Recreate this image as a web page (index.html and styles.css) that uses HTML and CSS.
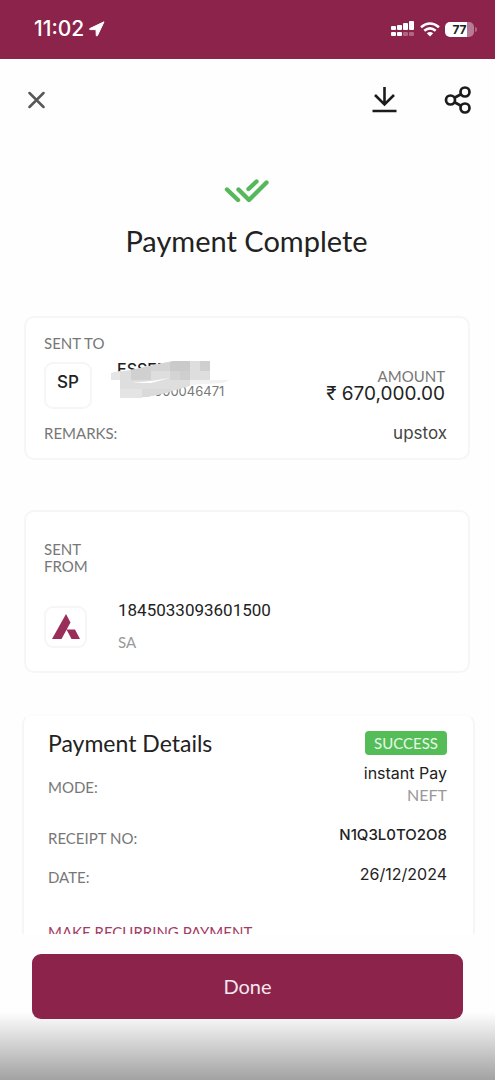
FILE: index.html
```
<!DOCTYPE html>
<html lang="en">
<head>
<meta charset="utf-8">
<meta name="viewport" content="width=device-width, initial-scale=1">
<title>Payment Complete</title>
<link rel="stylesheet" href="styles.css">
</head>
<body>
<div class="screen">
  <div class="status-bar">
    <div class="status-left">
      <span class="clock">11:02</span>
      <svg width="16" height="16" viewBox="0 0 16 16" aria-hidden="true"><path d="M15 .8 .8 7.600q-.8.8.3 1H7l.3 5.900q.3 1 1.100.2z" fill="#fff" stroke="#fff" stroke-linejoin="round"/></svg>
    </div>
    <div class="status-right">
      <svg width="24" height="16" viewBox="0 0 24 16" aria-hidden="true">
        <g fill="#fff"><rect x="0" y="5" width="5" height="4" rx="1"/><rect x="6" y="4" width="5" height="5" rx="1"/><rect x="12" y="2" width="5" height="7" rx="1"/><rect x="18" y="0" width="5" height="9" rx="1"/><rect x="0" y="11" width="5" height="4" rx="1"/><rect x="6" y="11" width="5" height="4" rx="1"/></g>
        <g fill="#b06585"><rect x="12" y="11" width="5" height="4" rx="1"/><rect x="18" y="11" width="5" height="4" rx="1"/></g>
      </svg>
      <svg width="20" height="15" viewBox="0 0 20 15" aria-hidden="true"><g fill="none" stroke="#fff" stroke-width="2.600"><path d="M1 5.200Q10-2.200 19 5.200"/><path d="M4.300 8.800Q10 4 15.700 8.800"/></g><path d="M6.800 11.200Q10 8.600 13.200 11.200L10 14.500z" fill="#fff"/></svg>
      <span class="battery"><span class="battery-level">77</span></span>
    </div>
  </div>

  <header class="toolbar">
    <button class="icon-button" type="button" aria-label="Close">
      <svg width="18" height="18" viewBox="0 0 18 18"><path d="M1.500 2 15.500 16M15.500 2 1.500 16" stroke="#585858" stroke-width="2.500" stroke-linecap="round"/></svg>
    </button>
    <div class="toolbar-actions">
      <button class="icon-button" type="button" aria-label="Download">
        <svg width="26" height="28" viewBox="0 0 26 28"><path d="M12.500 1V18M3 9 12.500 18.500 22 9M.5 25H24.500" fill="none" stroke="#1c1c1c" stroke-width="2.600"/></svg>
      </button>
      <button class="icon-button" type="button" aria-label="Share">
        <svg width="28" height="28" viewBox="0 0 28 28"><g fill="none" stroke="#1c1c1c" stroke-width="2.700"><circle cx="6.500" cy="14" r="4.500"/><circle cx="21" cy="6" r="4.500"/><circle cx="21" cy="22" r="4.500"/><path d="M10.500 11.800 17 8.200M10.500 16.200 17 19.800"/></g></svg>
      </button>
    </div>
  </header>

  <main class="content">
    <section class="result">
      <svg width="46" height="24" viewBox="0 0 46 24" aria-hidden="true"><path d="M3 10.500 14 21M14.500 10.500 25 21 42.500 3.500M24.500 10 32.500 2.500" fill="none" stroke="#55b95b" stroke-width="4.400" stroke-linecap="round" stroke-linejoin="round"/></svg>
      <h1 class="title">Payment Complete</h1>
    </section>

    <section class="card card-to">
      <div class="label">SENT TO</div>
      <div class="party">
        <div class="avatar">SP</div>
        <div class="payee">
          <div class="payee-name">ESSENT</div>
          <div class="payee-account">000046471</div>
          <svg class="mask" width="120" height="40" viewBox="0 0 120 40" aria-hidden="true">
            <path d="M0 12 20 9 52 2 62 0H99V19H79V25L54 32 36 36 9 37V19H0z" fill="#dedede"/>
            <path d="M79 19H118L112 22 79 24z" fill="#f2f2f2"/>
            <path d="M0 12 9 10V19H0z" fill="#e6e6e6"/>
            <path d="M20 9 40 5V19H20z" fill="#d0d0d0"/>
            <path d="M40 5 52 2 59 1V10H40zM59 10H69V19H59z" fill="#d4d4d4"/>
            <path d="M59 1 62 0H79V10H59z" fill="#cacaca"/>
            <path d="M69 10H79V19H69zM89 0H99V10H89z" fill="#cfcfcf"/>
            <path d="M9 28H31V37H9z" fill="#e4e4e4"/>
            <path d="M31 28H60V31L54 32 36 36 31 36z" fill="#dadada"/>
            <path d="M21 22 40 20 59 17 40 22z" fill="#fff"/>
          </svg>
        </div>
        <div class="amount">
          <div class="label">AMOUNT</div>
          <div class="amount-value">₹ 670,000.00</div>
        </div>
      </div>
      <div class="row">
        <div class="label">REMARKS:</div>
        <div class="remark">upstox</div>
      </div>
    </section>

    <section class="card card-from">
      <div class="label">SENT<br>FROM</div>
      <div class="source">
        <div class="bank">
          <svg width="28" height="26" viewBox="0 0 28 26" aria-hidden="true"><path d="M14 0 18.500 8.500 9.500 25H0zM14.500 15.500H23L28 25H19.500z" fill="#9a2e5b"/></svg>
        </div>
        <div>
          <div class="account-number">1845033093601500</div>
          <div class="account-type">SA</div>
        </div>
      </div>
    </section>

    <section class="card card-details">
      <div class="row">
        <h2 class="subtitle">Payment Details</h2>
        <span class="badge">SUCCESS</span>
      </div>
      <div class="row mode">
        <div class="label">MODE:</div>
        <div class="mode-value">
          <div class="value">instant Pay</div>
          <div class="muted">NEFT</div>
        </div>
      </div>
      <div class="row receipt"><div class="label">RECEIPT NO:</div><div class="value reference">N1Q3L0TO2O8</div></div>
      <div class="row date"><div class="label">DATE:</div><div class="value">26/12/2024</div></div>
      <a class="recurring" href="#">MAKE RECURRING PAYMENT</a>
    </section>
  </main>

  <footer class="footer">
    <button class="done" type="button">Done</button>
  </footer>
</div>
</body>
</html>
```
FILE: styles.css
```
* { box-sizing: border-box; }

body {
  margin: 0;
  background: #fefefe;
  color: #222;
  font-family: Lato, "Liberation Sans", sans-serif;
}

.screen {
  display: flex;
  flex-direction: column;
  height: 100vh;
}

.status-bar {
  display: flex;
  flex: none;
  justify-content: space-between;
  align-items: center;
  height: 59px;
  padding: 0 21px 1px 34px;
  background: #8b234b;
  color: #fff;
  font-family: Inter, sans-serif;
}

.status-left,
.status-right {
  display: flex;
  align-items: center;
  gap: 5px;
}

.clock {
  font-size: 21px;
  font-weight: 500;
  line-height: 24px;
}

.battery {
  position: relative;
  width: 29px;
  height: 15px;
  border-radius: 5px;
  background: linear-gradient(to right, #fff 77%, #b97a95 77%);
}

.battery::after {
  content: "";
  position: absolute;
  top: 5px;
  right: -3px;
  width: 2px;
  height: 5px;
  border-radius: 0 2px 2px 0;
  background: #b06585;
}

.battery-level {
  display: block;
  color: #222;
  font-size: 12px;
  font-weight: 700;
  line-height: 15px;
  text-align: center;
}

.toolbar {
  display: flex;
  flex: none;
  justify-content: space-between;
  align-items: center;
  height: 81px;
  padding: 0 23px 0 28px;
}

.toolbar-actions {
  display: flex;
  gap: 46px;
}

.icon-button {
  display: flex;
  padding: 0;
  border: 0;
  background: none;
}

.content {
  flex: 1;
  min-height: 0;
  overflow: hidden;
}

.result {
  display: flex;
  flex-direction: column;
  align-items: center;
  padding: 39px 2px 58px 0;
}

.title {
  margin: 20px 0 0;
  font-size: 29px;
  font-weight: 400;
  line-height: 35px;
}

.card {
  margin: 0 25px 0 24px;
  border: 2px solid #f6f6f6;
  border-radius: 10px;
  background: #fff;
}

.label,
.muted {
  color: #777;
  font-size: 15px;
  line-height: 18px;
}

.row {
  display: flex;
  justify-content: space-between;
  align-items: center;
}

.card-to {
  padding: 16px 21px 16px 18px;
}

.party {
  display: flex;
  margin: 10px 0 15px;
}

.avatar,
.bank {
  flex: none;
  border: 2px solid #f6f6f6;
  border-radius: 9px;
  text-align: center;
}

.avatar {
  width: 48px;
  height: 47px;
  font-family: Inter, sans-serif;
  font-size: 17px;
  font-weight: 500;
  line-height: 36px;
}

.payee {
  position: relative;
  flex: 1;
  margin-left: 25px;
  font-family: Inter, sans-serif;
}

.payee-name {
  font-size: 16px;
  font-weight: 500;
  line-height: 14px;
}

.payee-account {
  margin: 7px 0 0 37px;
  color: #777;
  font-size: 13px;
  line-height: 16px;
}

.mask {
  position: absolute;
  top: -1px;
  left: -6px;
}

.amount {
  padding: 5px 2px 0 0;
  text-align: right;
}

.amount-value {
  font-family: Inter, sans-serif;
  font-size: 19px;
  line-height: 18px;
}

.remark {
  color: #444;
  font-family: Inter, sans-serif;
  font-size: 17px;
  line-height: 18px;
}

.card-from {
  margin-top: 50px;
  padding: 29px 20px 19px 18px;
}

.card-from .label {
  line-height: 17px;
}

.source {
  display: flex;
  align-items: center;
  gap: 31px;
  margin-top: 24px;
}

.bank {
  display: flex;
  justify-content: center;
  align-items: center;
  width: 43px;
  height: 42px;
  margin-top: 2px;
}

.account-number {
  font-family: Roboto, sans-serif;
  font-size: 17px;
  line-height: 22px;
}

.account-type {
  margin-top: 11px;
  color: #999;
  font-size: 15px;
  line-height: 20px;
}

.card-details {
  margin: 41px 20px 0 22px;
  padding: 13px 26px 0 24px;
  border-top-color: #fcfcfc;
}

.card-details .label {
  padding-top: 6px;
}

.subtitle {
  margin: 0;
  font-size: 23px;
  font-weight: 400;
  line-height: 28px;
}

.badge {
  padding: 0 9px;
  border-radius: 4px;
  background: #55bd58;
  color: #e5f7e5;
  font-size: 15px;
  line-height: 24px;
}

.mode {
  margin-top: 5px;
}

.mode-value {
  text-align: right;
}

.mode-value .muted {
  color: #999;
  font-size: 16px;
  line-height: 22px;
}

.value {
  color: #222;
  font-family: Inter, sans-serif;
  font-size: 16px;
  line-height: 22px;
}

.reference {
  font-size: 15px;
  font-weight: 500;
}

.receipt {
  margin-top: 17px;
}

.date {
  margin-top: 15px;
}

.recurring {
  display: block;
  margin-top: 35px;
  color: #a43d65;
  font-size: 15px;
  line-height: 22px;
  text-decoration: none;
}

.footer {
  flex: none;
  padding: 20px 32px 61px;
  background: linear-gradient(to top, #a2a2a2, #fefefe 68px);
}

.done {
  display: block;
  width: 100%;
  padding: 20px;
  border: 0;
  border-radius: 9px;
  background: #8b234b;
  color: #f7e6ed;
  font-family: Lato, sans-serif;
  font-size: 20px;
  line-height: 25px;
}
```
